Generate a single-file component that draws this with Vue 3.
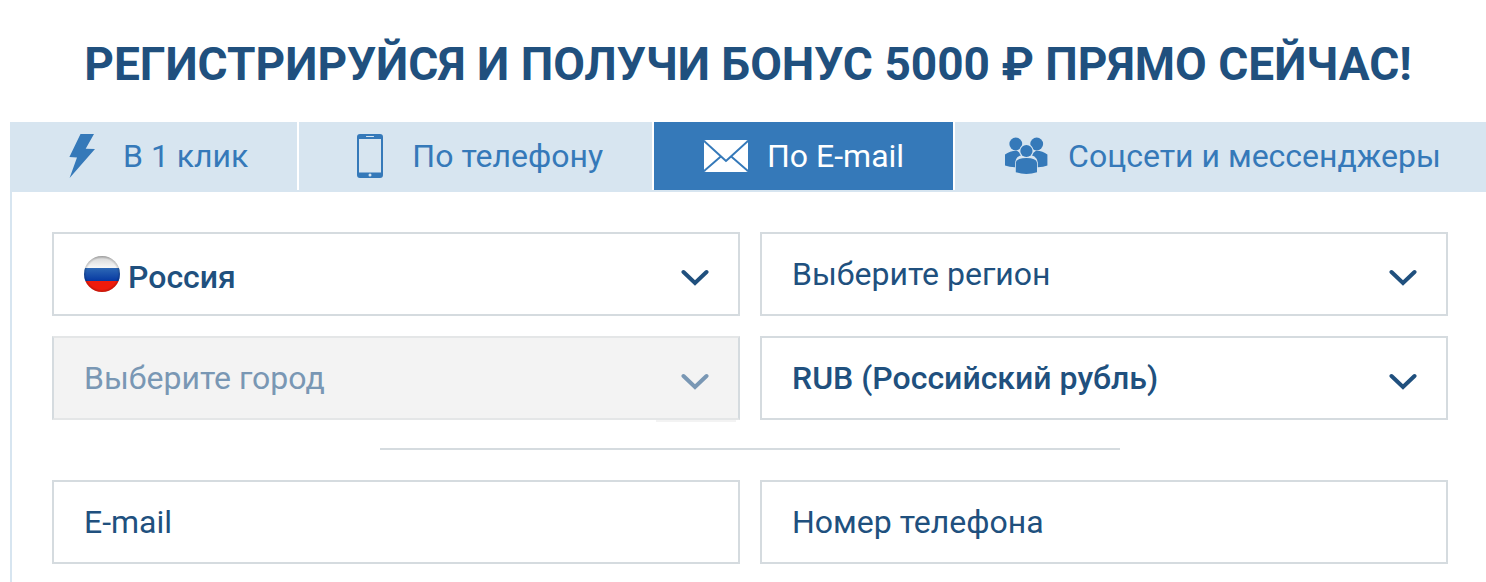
<template>
  <main class="registration">
    <h1 class="title">Регистрируйся и получи бонус 5000 ₽ прямо сейчас!</h1>

    <nav class="tabs">
      <button
        v-for="tab in tabs"
        :key="tab.id"
        type="button"
        class="tab"
        :class="{ active: tab.id === currentTab }"
        @click="currentTab = tab.id"
      >
        <svg class="tab-icon" viewBox="0 0 44 44" aria-hidden="true">
          <path
            v-if="tab.id === 'click'"
            fill="currentColor"
            d="M20.5 0H34L25.7 14.7L35 15L9.6 44L17 23.5L9.4 23Z"
          />
          <path
            v-else-if="tab.id === 'phone'"
            fill="currentColor"
            fill-rule="evenodd"
            d="M11 0H31a3 3 0 0 1 3 3V41a3 3 0 0 1-3 3H11a3 3 0 0 1-3-3V3a3 3 0 0 1 3-3ZM10 5V38.4H32V5ZM17.5 1.9a.6.6 0 0 0 0 1.2h7a.6.6 0 0 0 0-1.2ZM21 39.6a1.5 1.5 0 1 0 0 3a1.5 1.5 0 0 0 0-3Z"
          />
          <g v-else-if="tab.id === 'email'">
            <rect y="6" width="44" height="32" rx="2" fill="currentColor" />
            <path
              class="envelope-line"
              d="M0 7L19 24.2L22 27L25 24.2L44 7M0 37L16.8 22.4M44 37L27.2 22.4"
            />
          </g>
          <g v-else fill="currentColor">
            <circle cx="10.8" cy="10" r="6.4" />
            <circle cx="31.7" cy="10" r="6.4" />
            <path d="M0 20.5Q5 16.5 12 16.7L21.4 24L31 16.7Q37.5 16.5 42.4 20.5V31.5Q38 33.5 32 33.3H11Q5 33.5 0 31.5Z" />
            <circle class="people-gap" cx="21.4" cy="17" r="7.2" />
            <path
              class="people-gap"
              d="M10 34V28.5Q11 20.6 21.4 20.6T32.8 28.5V34Z"
            />
            <circle cx="21.4" cy="17" r="6.1" />
            <path class="people-ring" d="M10.8 38.2V28.5Q11.6 23.9 21.4 23.9T32 28.5V38.2Q21.4 41.8 10.8 38.2Z" />
          </g>
        </svg>
        {{ tab.label }}
      </button>
    </nav>

    <form class="panel" @submit.prevent>
      <div class="fields">
        <div class="field with-flag">
          <svg class="flag" viewBox="0 0 36 36" aria-hidden="true">
            <defs>
              <clipPath id="flag-round"><circle cx="18" cy="18" r="18" /></clipPath>
              <linearGradient id="flag-white" x2="0" y2="1">
                <stop offset="0" stop-color="#bdbdbd" />
                <stop offset=".3" stop-color="#dedede" />
                <stop offset="1" stop-color="#f8f8f8" />
              </linearGradient>
              <linearGradient id="flag-blue" x2="0" y2="1">
                <stop offset="0" stop-color="#2d68b5" />
                <stop offset="1" stop-color="#0739a2" />
              </linearGradient>
              <radialGradient id="flag-shade">
                <stop offset=".85" stop-color="#000" stop-opacity="0" />
                <stop offset="1" stop-color="#000" stop-opacity=".2" />
              </radialGradient>
            </defs>
            <g clip-path="url(#flag-round)">
              <rect width="36" height="12" fill="url(#flag-white)" />
              <rect y="12" width="36" height="13" fill="url(#flag-blue)" />
              <rect y="25" width="36" height="11" fill="#f01b0b" />
              <rect width="36" height="36" fill="url(#flag-shade)" />
            </g>
          </svg>
          <select v-model="form.country" class="control chosen" aria-label="Страна">
            <option>Россия</option>
          </select>
          <svg class="chevron" viewBox="0 0 28 18" aria-hidden="true">
            <path d="M2.5 3L14 14L25.5 3" />
          </svg>
        </div>

        <div class="field">
          <select v-model="form.region" class="control" aria-label="Регион">
            <option value="">Выберите регион</option>
          </select>
          <svg class="chevron" viewBox="0 0 28 18" aria-hidden="true">
            <path d="M2.5 3L14 14L25.5 3" />
          </svg>
        </div>

        <div class="field disabled">
          <select v-model="form.city" class="control" aria-label="Город" disabled>
            <option value="">Выберите город</option>
          </select>
          <svg class="chevron" viewBox="0 0 28 18" aria-hidden="true">
            <path d="M2.5 3L14 14L25.5 3" />
          </svg>
        </div>

        <div class="field">
          <select v-model="form.currency" class="control chosen" aria-label="Валюта">
            <option value="RUB">RUB (Российский рубль)</option>
          </select>
          <svg class="chevron" viewBox="0 0 28 18" aria-hidden="true">
            <path d="M2.5 3L14 14L25.5 3" />
          </svg>
        </div>
      </div>

      <hr class="divider" />

      <div class="fields">
        <div class="field">
          <input
            v-model="form.email"
            class="control"
            type="email"
            placeholder="E-mail"
            aria-label="E-mail"
          />
        </div>
        <div class="field">
          <input
            v-model="form.phone"
            class="control"
            type="tel"
            placeholder="Номер телефона"
            aria-label="Номер телефона"
          />
        </div>
      </div>
    </form>
  </main>
</template>

<script setup>
import { reactive, ref } from "vue";

const tabs = [
  { id: "click", label: "В 1 клик" },
  { id: "phone", label: "По телефону" },
  { id: "email", label: "По E-mail" },
  { id: "social", label: "Соцсети и мессенджеры" },
];

const currentTab = ref("email");

const form = reactive({
  country: "Россия",
  region: "",
  city: "",
  currency: "RUB",
  email: "",
  phone: "",
});
</script>

<style>
body {
  margin: 0;
  background: #fff;
}
</style>

<style scoped>
.registration {
  padding-left: 10px;
  overflow: hidden;
  font-family: Roboto, "Liberation Sans", sans-serif;
  font-size: 32px;
  color: #20507e;
}

.title {
  margin: 0;
  padding: 36px 0 30px;
  font-size: 46px;
  line-height: 56px;
  font-weight: 700;
  text-align: center;
  text-transform: uppercase;
  white-space: nowrap;
}

.tabs {
  display: flex;
  gap: 2px;
  border-bottom: 2px solid #d7e5f0;
}

.tab {
  display: flex;
  align-items: center;
  gap: 19px;
  height: 68px;
  padding: 0 49px 0 50px;
  border: 0;
  background: #d7e5f0;
  color: #3579b9;
  font: inherit;
  white-space: nowrap;
  cursor: pointer;
}

.tab:last-child {
  flex: 1;
}

.tab.active {
  background: #3579b9;
  color: #fff;
}

.tab-icon {
  flex: none;
  width: 44px;
  height: 44px;
}

.envelope-line {
  fill: none;
  stroke: #3579b9;
  stroke-width: 2;
}

.people-gap {
  fill: #d7e5f0;
}

.tab.active .people-gap {
  fill: #3579b9;
}

.panel {
  padding: 40px 38px 18px 40px;
  border-left: 2px solid #d7e5f0;
}

.fields {
  display: grid;
  grid-template-columns: 1fr 1fr;
  gap: 20px;
}

.field {
  position: relative;
  display: grid;
  align-items: center;
}

.control {
  grid-area: 1 / 1;
  box-sizing: border-box;
  width: 100%;
  height: 84px;
  margin: 0;
  padding: 0 60px 0 30px;
  border: 2px solid #d5dbdf;
  border-radius: 0;
  outline: 0;
  background: #fff;
  color: #20507e;
  font: inherit;
  appearance: none;
}

.control:focus {
  border-color: #3579b9;
}

.control::placeholder {
  color: #20507e;
  opacity: 1;
}

.control.chosen {
  font-weight: 500;
}

.with-flag .control {
  padding: 6px 60px 0 74px;
}

.flag {
  grid-area: 1 / 1;
  z-index: 1;
  width: 36px;
  height: 36px;
  margin-left: 32px;
  pointer-events: none;
}

.chevron {
  grid-area: 1 / 1;
  justify-self: end;
  width: 28px;
  height: 18px;
  margin: 8px 31px 0 0;
  fill: none;
  stroke: #20507e;
  stroke-width: 4;
  stroke-linecap: round;
  pointer-events: none;
}

.disabled .control {
  border-color: #e4e6e7 #d5dbdf;
  background: #f3f3f3;
  color: #7997b4;
  opacity: 1;
}

.disabled .chevron {
  stroke: #7997b4;
}

/* thin edge under the locked field */
.disabled::after {
  content: "";
  position: absolute;
  top: 100%;
  right: 4px;
  width: 80px;
  height: 2px;
  background: #f3f3f3;
}

.divider {
  width: 53%;
  height: 2px;
  margin: 28px auto 30px;
  border: 0;
  background: #d5dbdf;
}
</style>
